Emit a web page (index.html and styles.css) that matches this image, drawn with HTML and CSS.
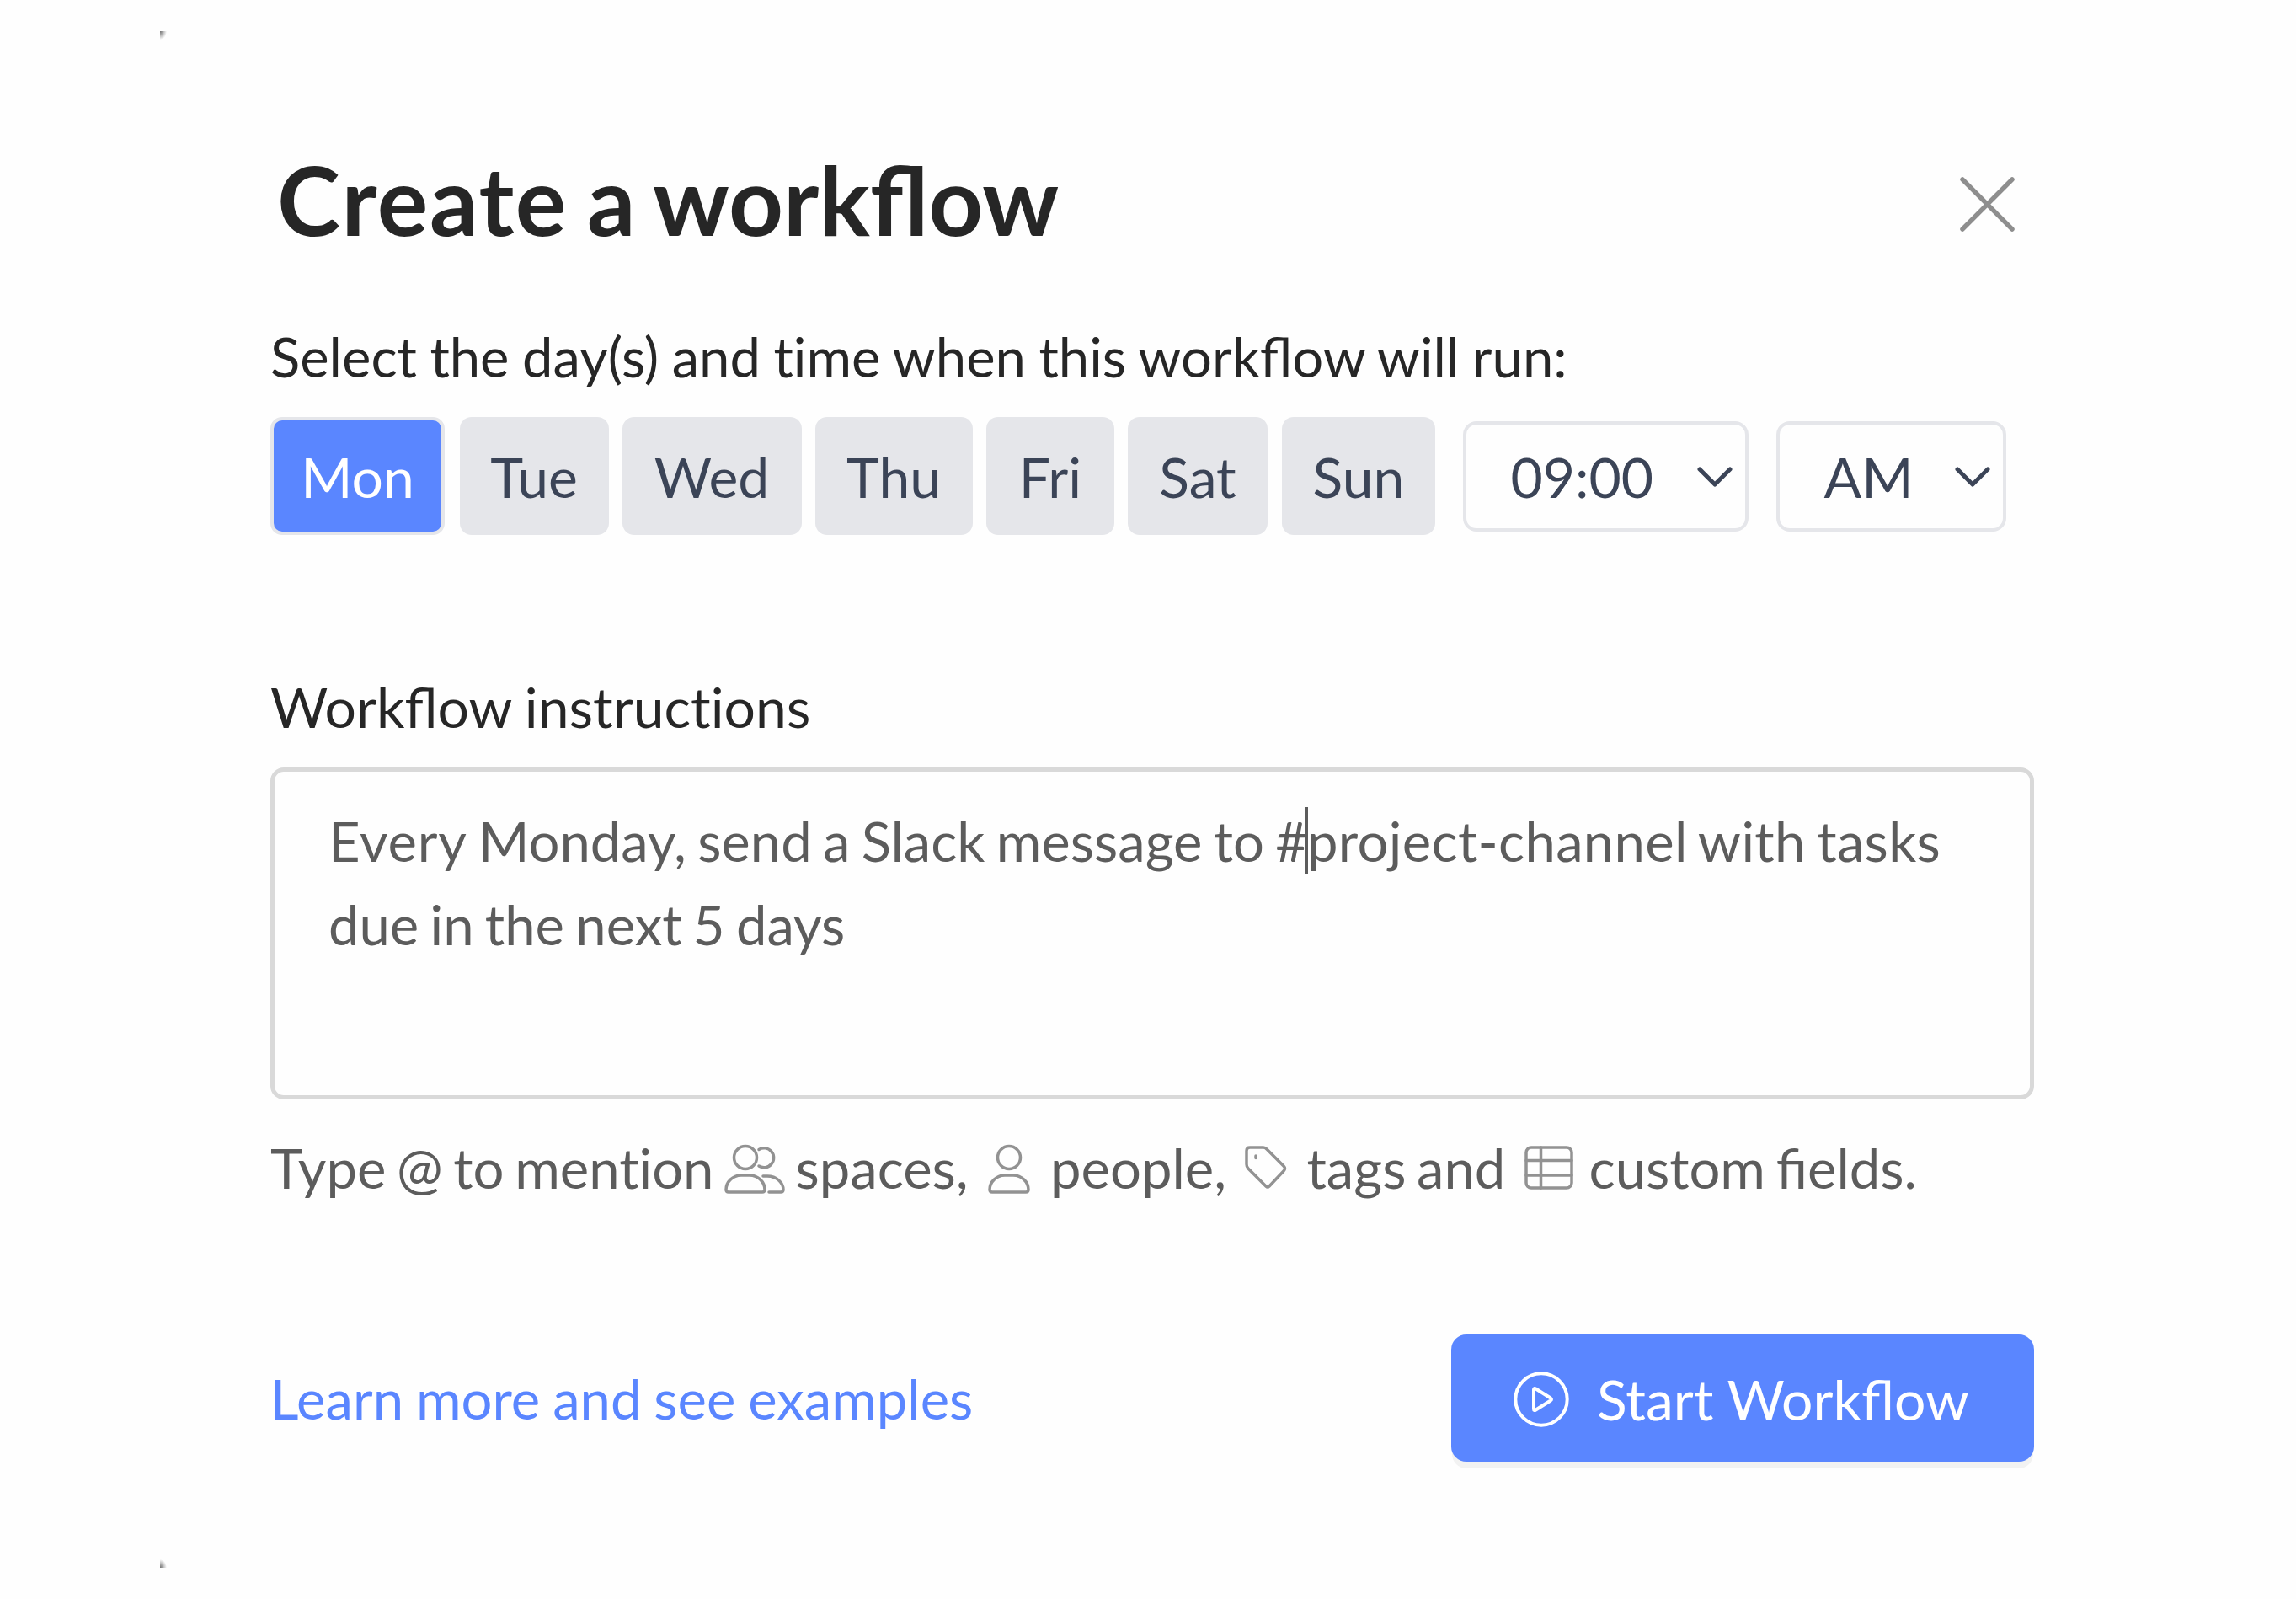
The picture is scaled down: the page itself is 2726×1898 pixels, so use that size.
FILE: index.html
```html
<!DOCTYPE html>
<html lang="en">
<head>
<meta charset="utf-8">
<title>Create a workflow</title>
<link rel="stylesheet" href="styles.css">
</head>
<body>
<main class="dialog">
  <i class="corner corner-top"></i>
  <i class="corner corner-bottom"></i>
  <header class="dialog-header">
    <h1 class="title"><span class="wide">Create</span> a workflow</h1>
    <svg class="close" viewBox="0 0 66 66"><path d="M3 3L62 62M62 3L3 62"/></svg>
  </header>
  <p class="label">Select the day(s) and <span class="plain">time</span> when this workflow will run:</p>
  <div class="schedule">
    <button class="day day-mon selected">Mon</button>
    <button class="day day-tue">Tue</button>
    <button class="day day-wed">Wed</button>
    <button class="day day-thu">Thu</button>
    <button class="day day-fri">Fri</button>
    <button class="day day-sat">Sat</button>
    <button class="day day-sun">Sun</button>
    <div class="select select-time"><span>09:00</span><svg class="chevron" viewBox="0 0 42 26"><path d="M3 3L21 21L39 3"/></svg></div>
    <div class="select select-period"><span>AM</span><svg class="chevron" viewBox="0 0 42 26"><path d="M3 3L21 21L39 3"/></svg></div>
  </div>
  <p class="label label-editor">Workflow <span class="plain">instructions</span></p>
  <div class="editor">
    <div class="line"><span class="loose">Every</span> Monday, send a Slack message to #<span class="caret"></span><span class="channel">project-channel with tasks</span></div>
    <div class="line">due in the next 5 days</div>
  </div>
  <div class="hint">
    <span>Type @ to <span class="plain">mention</span></span>
    <svg class="icon icon-spaces" viewBox="0 0 72 60"><circle cx="25" cy="16" r="13.5"/><path d="M41 6.500A11.500 11.500 0 1 1 41 26M2 54C2 45 10 37 20 37H30C40 37 48 45 48 54Q48 57 45 57H5Q2 57 2 54ZM46 38H51C62 38 70 46 70 54Q70 57 67 57H53"/></svg>
    <span>spaces,</span>
    <svg class="icon icon-people" viewBox="0 0 50 60"><circle cx="25" cy="16" r="13.500"/><path d="M2 54C2 45 10 37 20 37H30C40 37 48 45 48 54Q48 57 45 57H5Q2 57 2 54Z"/></svg>
    <span>people,</span>
    <svg class="icon icon-tag" viewBox="0 0 50 52"><path d="M2 6Q2 2 6 2H22Q24 2 26 4L46 24Q49 27 46 30L29 48Q27 50 25 48L4 27Q2 25 2 22Z"/><path d="M13 12V14.500"/></svg>
    <span>tags and</span>
    <svg class="icon icon-fields" viewBox="0 0 58 52"><rect x="2" y="2" width="54" height="48" rx="6"/><path d="M19.500 2V50M2 17.500H56M2 35H56"/></svg>
    <span>custom fields.</span>
  </div>
  <footer class="actions">
    <a class="link">Learn more and see examples</a>
    <button class="primary"><svg class="play" viewBox="0 0 66 66"><circle cx="33" cy="33" r="30.700"/><path d="M24 21.500Q24 19 26.500 20.500L44 31.500Q46 33 44 34.500L26.500 45.500Q24 47 24 44.500Z"/></svg><span>Start Workflow</span></button>
  </footer>
</main>
</body>
</html>
```

FILE: styles.css
```css
* { box-sizing: border-box; }
body { margin: 0; background: #fefefe; font-family: Lato, sans-serif; font-size: 66px; color: #262626; }
h1, p { margin: 0; }
button { border: 0; padding: 0; font: inherit; }
svg { display: block; fill: none; flex: none; stroke-linecap: round; stroke-linejoin: round; }

.dialog { position: relative; width: 2726px; height: 1898px; padding: 169px 311px 0 321px; overflow: hidden; }
.corner { position: absolute; left: 190px; width: 8px; height: 10px; }
.corner-top { top: 37px; background: radial-gradient(8px 10px at 0 0, #707070, #fefefe 100%); }
.corner-bottom { top: 1851px; background: radial-gradient(8px 10px at 0 100%, #707070, #fefefe 100%); }

.dialog-header { display: flex; justify-content: space-between; height: 214px; padding: 0 22px 0 8px; }
.title { font-size: 113.3px; line-height: 134px; font-weight: 700; word-spacing: -4.6px; white-space: nowrap; }
.wide { letter-spacing: 1.7px; }
.close { width: 66px; height: 66px; margin-top: 41px; stroke: #8e8e8e; stroke-width: 5.500; }

.label { font-size: 65.2px; line-height: 80px; white-space: nowrap; word-spacing: -1.2px; }
.label-editor { font-size: 66px; word-spacing: -1px; }
.plain { font-variant-ligatures: none; }

.schedule { display: flex; align-items: center; height: 140px; margin: 32px 0 164px; gap: 16.500px; color: #3b4457; }
.day { height: 140px; border-radius: 14px; background: #e5e6ea; color: #3b4457; line-height: 141px; }
.day-mon { width: 207px; }
.day-tue { width: 177px; margin-left: 1px; }
.day-wed { width: 213px; margin-left: -0.500px; }
.day-thu { width: 187px; margin-left: -0.500px; }
.day-fri { width: 152px; }
.day-sat { width: 166px; margin-left: -0.500px; }
.day-sun { width: 182px; padding-left: 1px; }
.selected { background: #5a86ff; border: 4px solid #e5e6ea; color: #fff; line-height: 133px; }
.select { display: flex; align-items: center; justify-content: space-between; height: 131px; margin-top: 1px; border: 4px solid #e5e6ea; border-radius: 16px; padding: 0 15px 0 53px; line-height: 124px; }
.select-time { width: 339px; margin-left: 16.500px; }
.select-period { width: 273px; margin-left: 16.500px; }
.chevron { width: 42px; height: 26px; margin-top: 3px; stroke: #3b4457; stroke-width: 5; }

.editor { height: 394px; margin-top: 32px; border: 5px solid #d9d9d9; border-radius: 16px; padding: 33px 0 0 64px; font-size: 65.2px; line-height: 98.500px; color: #5c5c5c; white-space: nowrap; }
.line { height: 98.500px; word-spacing: -3.4px; }
.loose { letter-spacing: 0.8px; }
.channel { letter-spacing: 0.3px; }
.caret { display: inline-block; width: 4px; height: 80px; margin: 0 -1px 0 -3px; background: #5c5c5c; vertical-align: -15px; }

.hint { display: grid; grid-template-columns: 539px 84.500px 228.500px 74px 231px 73.500px 258px 77px auto; height: 80px; margin-top: 41px; font-size: 65.2px; line-height: 80px; word-spacing: -4px; color: #5c5c5c; white-space: nowrap; }
.icon { stroke: #929292; stroke-width: 3.500; }
.icon-spaces { width: 72px; height: 60px; margin-top: 12px; }
.icon-people { width: 50px; height: 60px; margin-top: 12px; }
.icon-tag { width: 50px; height: 52px; margin-top: 14px; }
.icon-fields { width: 58px; height: 52px; margin-top: 14px; }

.actions { display: flex; justify-content: space-between; height: 151px; margin-top: 158px; line-height: 153px; }
.link { font-size: 65.2px; word-spacing: -1.8px; color: #5a86ff; }
.primary { display: flex; align-items: center; width: 692px; height: 151px; padding: 1px 0 0 74px; gap: 33px; border-radius: 18px; background: #5a86ff; color: #fff; box-shadow: 0 9px 0 -1px #f2f2f2; line-height: 153px; }
.play { width: 66px; height: 66px; margin-top: 1px; stroke: #fff; stroke-width: 4; }
```
